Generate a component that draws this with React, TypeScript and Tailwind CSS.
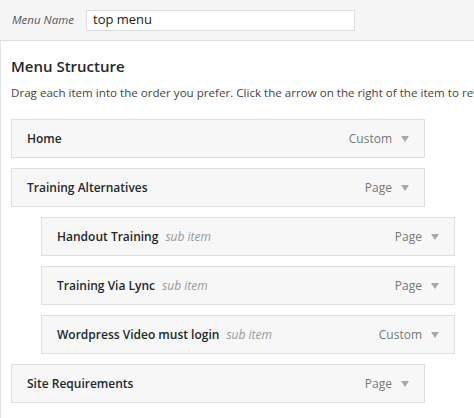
import React from 'react';

const items = [
  { title: 'Home', type: 'Custom', sub: false },
  { title: 'Training Alternatives', type: 'Page', sub: false },
  { title: 'Handout Training', type: 'Page', sub: true },
  { title: 'Training Via Lync', type: 'Page', sub: true },
  { title: 'Wordpress Video must login', type: 'Custom', sub: true },
  { title: 'Site Requirements', type: 'Page', sub: false },
];

const Arrow = () => (
  <svg width="8" height="6" viewBox="0 0 8 6" className="ml-[9px]">
    <path d="M0 0 L8 0 L4 6 Z" fill="#a7aaad" />
  </svg>
);

const MenuItem = ({ title, type, sub }) => (
  <div className={sub ? 'pl-[30px]' : ''}>
    <div className="flex items-center w-[414px] h-[39px] border border-[#dfdfdf] bg-[#f7f7f7] pl-[15px] pr-[15px]">
      <span className="text-[12px] font-semibold text-[#23282d]">{title}</span>
      {sub ? (
        <span className="ml-[7px] text-[12px] italic text-[#999]">sub item</span>
      ) : null}
      <span className="ml-auto text-[12px] text-[#777]">{type}</span>
      <Arrow />
    </div>
  </div>
);

export default function App() {
  return (
    <div className="w-[474px] h-[418px] overflow-hidden bg-white font-['Open_Sans',sans-serif]">
      <div className="flex items-center h-[41px] bg-[#f5f5f5] border-b border-[#dedede] pl-[12px]">
        <span className="text-[11.5px] italic text-[#555] w-[74px]">Menu Name</span>
        <div className="flex items-center w-[269px] h-[21px] bg-white border border-[#dddddd] pl-[6px] text-[13px] text-[#222]">
          top menu
        </div>
      </div>
      <div className="border-l border-[#e5e5e5] h-full pl-[10px]">
        <h3 className="pt-[14px] text-[15px] font-semibold text-[#23282d] leading-[22px]">Menu Structure</h3>
        <p className="mt-[8px] text-[11.6px] text-[#444] whitespace-nowrap overflow-hidden leading-[16px]">
          Drag each item into the order you prefer. Click the arrow on the right of the item to reveal additional configuration options.
        </p>
        <div className="mt-[18px] flex flex-col gap-[10px]">
          {items.map((it) => (
            <MenuItem key={it.title} {...it} />
          ))}
        </div>
      </div>
    </div>
  );
}
